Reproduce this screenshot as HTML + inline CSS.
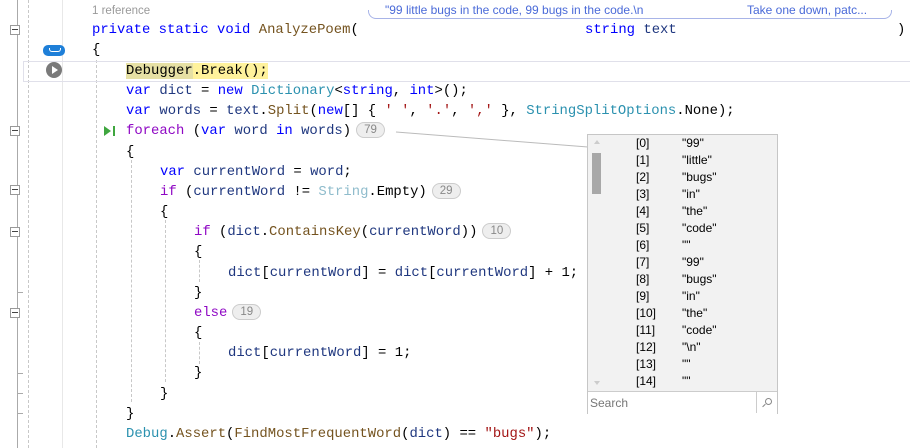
<!DOCTYPE html>
<html><head><style>
body{margin:0;width:910px;height:448px;overflow:hidden;background:#fff;position:relative;font-family:"Liberation Mono",monospace;}
.l{position:absolute;left:0;height:20px;line-height:20px;font-size:13.9px;white-space:pre;color:#000;}
.k{color:#0000ff}.c{color:#8f08c4}.t{color:#2b91af}.v{color:#1f377f}.m{color:#74531f}.s{color:#a31515}
.pill{display:inline-block;font-family:"Liberation Sans",sans-serif;font-size:11.5px;color:#888;border:1px solid #ccc;background:#eee;border-radius:9px;height:14px;line-height:14px;padding:0 7px;vertical-align:1px;margin-left:5px}
.vl{position:absolute;width:0;border-left:1px dashed #c8c8c8}
.box{position:absolute;left:10px;width:8px;height:8px;border:1px solid #999;background:#fff}
.box:after{content:"";position:absolute;left:1px;top:3px;width:6px;height:1px;background:#444}
.tick{position:absolute;left:17px;width:6px;height:1px;background:#aaa}
.pop{position:absolute;left:587px;top:134px;width:189px;height:278px;background:#f2f2f2;border:1px solid #c6c6c6;font-family:"Liberation Sans",sans-serif;font-size:12px}
.r{position:absolute;height:17px;line-height:17px;}
</style></head><body>
<div style="position:absolute;left:17px;top:0;height:448px;border-left:1px solid #aaa"></div>
<div class="vl" style="left:28px;top:0;height:448px"></div>
<div class="vl" style="left:62px;top:0;height:448px;border-left:1px solid #e8e8e8"></div>
<div class="vl" style="left:96px;top:60px;height:388px"></div>
<div class="vl" style="left:131px;top:160px;height:242px"></div>
<div class="vl" style="left:165px;top:220px;height:162px"></div>
<div class="vl" style="left:199px;top:260px;height:22px"></div>
<div class="vl" style="left:199px;top:342px;height:22px"></div>
<div class="box" style="top:25px"></div>
<div class="box" style="top:126px"></div>
<div class="box" style="top:185px"></div>
<div class="box" style="top:227px"></div>
<div class="box" style="top:308px"></div>
<div class="tick" style="top:292px"></div><div class="tick" style="top:373px"></div><div class="tick" style="top:393px"></div><div class="tick" style="top:413px"></div>
<div style="position:absolute;left:23px;top:61px;width:900px;height:19px;border:1px solid #e0e0ea"></div>
<div style="position:absolute;left:43px;top:45px;width:22px;height:11px;background:#1e7fd8;border-radius:5px"><div style="position:absolute;left:6px;top:3px;width:10px;height:3px;border:1.5px solid #fff;border-top:none;border-radius:0 0 3px 3px"></div></div>
<div style="position:absolute;left:46px;top:62px;width:16px;height:16px;border-radius:50%;background:#7a7a7a"><div style="position:absolute;left:6px;top:4px;border-left:6px solid #fff;border-top:4px solid transparent;border-bottom:4px solid transparent"></div></div>
<div style="position:absolute;left:104px;top:126px;border-left:7px solid #3fa63f;border-top:5px solid transparent;border-bottom:5px solid transparent"></div>
<div style="position:absolute;left:113px;top:126px;width:2px;height:10px;background:#3fa63f"></div>
<div style="position:absolute;left:92px;top:5px;font:11.5px 'Liberation Sans',sans-serif;color:#999">1 reference</div>
<div style="position:absolute;left:368px;top:10px;width:522px;height:8px;border:1px solid #a8b4e8;border-top:none;border-radius:0 0 8px 8px"></div>
<div style="position:absolute;left:383px;top:3px;font:12px 'Liberation Sans',sans-serif;color:#4a6ad8;background:#fff;padding:0 2px">"99 little bugs in the code, 99 bugs in the code.\n</div>
<div style="position:absolute;left:747px;top:3px;font:12px 'Liberation Sans',sans-serif;color:#4a6ad8">Take one down, patc...</div>
<div class="l" style="top:20px;left:92px"><span class="k">private static void</span> <span class="m">AnalyzePoem</span>(</div>
<div class="l" style="top:20px;left:585px"><span class="k">string</span> <span class="v">text</span></div>
<div class="l" style="top:20px;left:897px">)</div>
<div class="l" style="top:40px;left:92px">{</div>
<div class="l" style="top:61px;left:126px"><span style="background:#e6e0a4">Debugger</span><span style="background:#fff29c">.Break();</span></div>
<div class="l" style="top:81px;left:126px"><span class="k">var</span> <span class="v">dict</span> = <span class="k">new</span> <span class="t">Dictionary</span>&lt;<span class="k">string</span>, <span class="k">int</span>&gt;();</div>
<div class="l" style="top:101px;left:126px"><span class="k">var</span> <span class="v">words</span> = <span class="v">text</span>.<span class="m">Split</span>(<span class="k">new</span>[] { <span class="s">' '</span>, <span class="s">'.'</span>, <span class="s">','</span> }, <span class="t">StringSplitOptions</span>.None);</div>
<div class="l" style="top:121px;left:126px"><span class="c">foreach</span> (<span class="k">var</span> <span class="v">word</span> <span class="k">in</span> <span class="v">words</span>)<span class="pill">79</span></div>
<div class="l" style="top:142px;left:126px">{</div>
<div class="l" style="top:162px;left:160px"><span class="k">var</span> <span class="v">currentWord</span> = <span class="v">word</span>;</div>
<div class="l" style="top:182px;left:160px"><span class="c">if</span> (<span class="v">currentWord</span> != <span style="color:#8fbccc">String</span>.Empty)<span class="pill">29</span></div>
<div class="l" style="top:202px;left:160px">{</div>
<div class="l" style="top:222px;left:194px"><span class="c">if</span> (<span class="v">dict</span>.<span class="m">ContainsKey</span>(<span class="v">currentWord</span>))<span class="pill">10</span></div>
<div class="l" style="top:242px;left:194px">{</div>
<div class="l" style="top:263px;left:228px"><span class="v">dict</span>[<span class="v">currentWord</span>] = <span class="v">dict</span>[<span class="v">currentWord</span>] + 1;</div>
<div class="l" style="top:283px;left:194px">}</div>
<div class="l" style="top:303px;left:194px"><span class="c">else</span><span class="pill">19</span></div>
<div class="l" style="top:323px;left:194px">{</div>
<div class="l" style="top:343px;left:228px"><span class="v">dict</span>[<span class="v">currentWord</span>] = 1;</div>
<div class="l" style="top:363px;left:194px">}</div>
<div class="l" style="top:384px;left:160px">}</div>
<div class="l" style="top:404px;left:126px">}</div>
<div class="l" style="top:424px;left:126px"><span class="t">Debug</span>.<span class="m">Assert</span>(<span class="m">FindMostFrequentWord</span>(<span class="v">dict</span>) == <span class="s">"bugs"</span>);</div>
<svg style="position:absolute;left:0;top:0" width="910" height="448"><line x1="396" y1="132" x2="588" y2="147" stroke="#bbb" stroke-width="1"/></svg>
<div class="pop">
<div style="position:absolute;left:4px;top:18px;width:9px;height:41px;background:#a8a8a8"></div>
<div style="position:absolute;left:6px;top:5px;border-bottom:4px solid #ccc;border-left:3px solid transparent;border-right:3px solid transparent"></div>
<div style="position:absolute;left:6px;top:246px;border-top:4px solid #ccc;border-left:3px solid transparent;border-right:3px solid transparent"></div>
<div class="r" style="top:0;left:48px">[0]</div><div class="r" style="top:0;left:94px">"99"</div>
<div class="r" style="top:17px;left:48px">[1]</div><div class="r" style="top:17px;left:94px">"little"</div>
<div class="r" style="top:34px;left:48px">[2]</div><div class="r" style="top:34px;left:94px">"bugs"</div>
<div class="r" style="top:51px;left:48px">[3]</div><div class="r" style="top:51px;left:94px">"in"</div>
<div class="r" style="top:68px;left:48px">[4]</div><div class="r" style="top:68px;left:94px">"the"</div>
<div class="r" style="top:85px;left:48px">[5]</div><div class="r" style="top:85px;left:94px">"code"</div>
<div class="r" style="top:102px;left:48px">[6]</div><div class="r" style="top:102px;left:94px">""</div>
<div class="r" style="top:119px;left:48px">[7]</div><div class="r" style="top:119px;left:94px">"99"</div>
<div class="r" style="top:136px;left:48px">[8]</div><div class="r" style="top:136px;left:94px">"bugs"</div>
<div class="r" style="top:153px;left:48px">[9]</div><div class="r" style="top:153px;left:94px">"in"</div>
<div class="r" style="top:170px;left:48px">[10]</div><div class="r" style="top:170px;left:94px">"the"</div>
<div class="r" style="top:187px;left:48px">[11]</div><div class="r" style="top:187px;left:94px">"code"</div>
<div class="r" style="top:204px;left:48px">[12]</div><div class="r" style="top:204px;left:94px">"\n"</div>
<div class="r" style="top:221px;left:48px">[13]</div><div class="r" style="top:221px;left:94px">""</div>
<div class="r" style="top:238px;left:48px">[14]</div><div class="r" style="top:238px;left:94px">""</div>
<div style="position:absolute;left:0;top:256px;width:189px;height:22px;background:#fff;border-top:1px solid #ccc"></div>
<div style="position:absolute;left:2px;top:261px;color:#777;font-size:12px">Search</div>
<div style="position:absolute;left:168px;top:257px;height:21px;border-left:1px solid #ccc"></div>
<div style="position:absolute;left:177px;top:263px;width:5px;height:5px;border:1px solid #888;border-radius:50%"></div>
<div style="position:absolute;left:174px;top:270px;width:4px;height:1px;background:#888;transform:rotate(-45deg)"></div>
</div>
</body></html>
